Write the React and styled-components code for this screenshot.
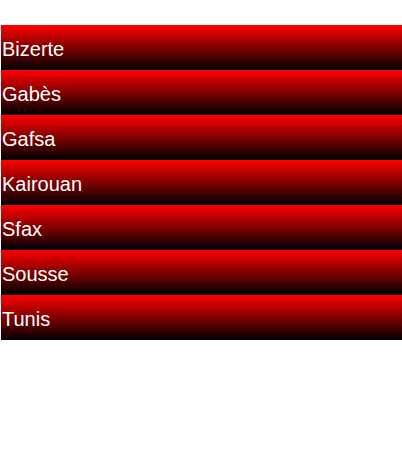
import React from 'react';
import styled, { createGlobalStyle } from 'styled-components';

const GlobalStyle = createGlobalStyle`
    body {
        margin: 0;
        background: #fff;
        font-family: "Liberation Sans", Arial, sans-serif;
    }
`;

const CityList = styled.ul`
    list-style: none;
    margin: 0;
    padding: 25px 0 0 1px;
`;

const CityItem = styled.li`
    box-sizing: border-box;
    height: 45px;
    padding: 3px 0 0 1px;
    line-height: 42px;
    color: #fff;
    font-size: 20px;
    background: linear-gradient(to bottom, #ff0000, #000000);
`;

const cities = ['Bizerte', 'Gabès', 'Gafsa', 'Kairouan', 'Sfax', 'Sousse', 'Tunis'];

export default function App() {
    return (
        <>
            <GlobalStyle />
            <CityList>
                { cities.map(city => <CityItem key={city}>{city}</CityItem>) }
            </CityList>
        </>
    );
}
